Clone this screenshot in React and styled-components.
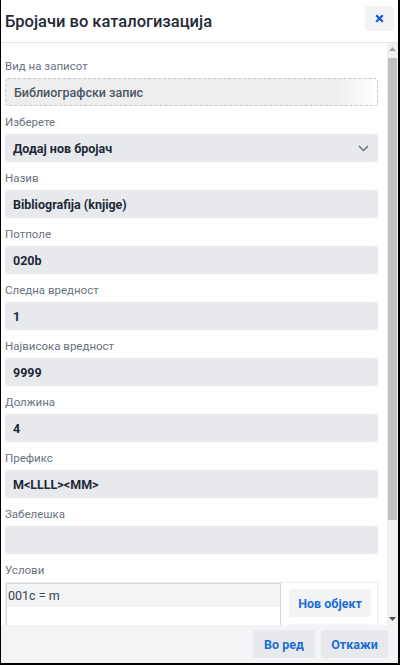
import React from "react";
import styled, { createGlobalStyle } from "styled-components";

const GlobalStyle = createGlobalStyle`
  html, body {
    margin: 0;
    padding: 0;
    background: #fff;
  }
  body {
    font-family: Roboto, "Noto Sans", sans-serif;
  }
  * {
    box-sizing: border-box;
  }
`;

const Dialog = styled.div`
  width: 400px;
  height: 665px;
  display: flex;
  flex-direction: column;
  background: #fff;
  border-left: 1px solid #000;
  border-right: 2px solid #000;
  border-bottom: 2px solid #000;
  overflow: hidden;
`;

const Header = styled.div`
  height: 43px;
  flex-shrink: 0;
  display: flex;
  align-items: center;
  justify-content: space-between;
  padding: 0 4px 0 4px;
  border-bottom: 1px solid #e3e5ea;
`;

const Title = styled.h2`
  margin: 0;
  font-size: 16.5px;
  font-weight: 500;
  color: #1f2937;
`;

const CloseButton = styled.button`
  width: 29px;
  height: 25px;
  margin-top: -5px;
  border: none;
  border-radius: 3px;
  background: #f2f3f5;
  display: flex;
  align-items: center;
  justify-content: center;
  padding: 0;
  cursor: pointer;
`;

const Main = styled.div`
  flex: 1;
  min-height: 0;
  display: flex;
`;

const Content = styled.div`
  flex: 1;
  overflow: hidden;
  padding: 15px 9px 0 4px;
`;

const Scrollbar = styled.div`
  width: 11px;
  flex-shrink: 0;
  display: flex;
  flex-direction: column;
  background: #f1f1f1;
`;

const ScrollArrow = styled.div`
  height: 12px;
  flex-shrink: 0;
  display: flex;
  align-items: center;
  justify-content: center;
`;

const ScrollTrack = styled.div`
  flex: 1;
  padding: 3px 1px 0 1px;
`;

const ScrollThumb = styled.div`
  height: 462px;
  background: #c1c1c1;
`;

const Field = styled.div`
  margin-bottom: 8px;
`;

const Label = styled.div`
  font-size: 11.5px;
  line-height: 16px;
  color: #6b7280;
  margin-bottom: 4px;
`;

const ValueBox = styled.div`
  height: 28px;
  display: flex;
  align-items: center;
  justify-content: space-between;
  padding: 0 9px 0 8px;
  border-radius: 3px;
  font-size: 12.5px;
  font-weight: ${(p) => (p.$muted ? 500 : 700)};
  color: ${(p) => (p.$muted ? "#4b5563" : "#1f2937")};
  background: ${(p) =>
    p.$muted
      ? "linear-gradient(90deg, #eeeeee 0%, #eeeeee 89%, #ffffff 100%)"
      : "#e7e9ed"};
  border: ${(p) => (p.$muted ? "1px dashed #c8c8c8" : "none")};
`;

const Conditions = styled.div`
  display: flex;
  border: 1px solid #eceef1;
  height: 150px;
`;

const ConditionList = styled.div`
  width: 275px;
  border: 1px solid #d6d8dc;
  border-bottom: none;
`;

const ConditionRow = styled.div`
  height: 23px;
  display: flex;
  align-items: center;
  padding-left: 1px;
  background: #f3f4f6;
  font-size: 12.5px;
  color: #374151;
`;

const ConditionActions = styled.div`
  flex: 1;
  display: flex;
  flex-direction: column;
  gap: 7px;
  padding: 6px 6px 0 8px;
`;

const Button = styled.button`
  height: 28px;
  flex-shrink: 0;
  width: ${(p) => p.$width || "auto"};
  border: none;
  border-radius: 3px;
  background: ${(p) => (p.$footer ? "#e8e9ec" : "#f2f3f5")};
  color: #1b6ed6;
  font-family: inherit;
  font-size: 12.5px;
  font-weight: 700;
  padding: 0;
  cursor: pointer;
`;

const Footer = styled.div`
  height: 38px;
  flex-shrink: 0;
  display: flex;
  align-items: center;
  justify-content: flex-end;
  gap: 6px;
  padding: 0 10px 0 0;
  background: #f3f4f6;
`;

const Chevron = () => (
  <svg width="11" height="7" viewBox="0 0 11 7" fill="none">
    <path d="M1 1l4.5 4.5L10 1" stroke="#6b7280" strokeWidth="1.5" />
  </svg>
);

const CloseIcon = () => (
  <svg width="9" height="9" viewBox="0 0 9 9">
    <path d="M1.2 1.2l6.6 6.6M7.8 1.2L1.2 7.8" stroke="#1a56db" strokeWidth="2.2" />
  </svg>
);

const Triangle = ({ down, color }) => (
  <svg width="7" height="4" viewBox="0 0 7 4">
    <path d={down ? "M0 0h7L3.5 4z" : "M0 4h7L3.5 0z"} fill={color} />
  </svg>
);

const fields = [
  { label: "Назив", value: "Bibliografija (knjige)" },
  { label: "Потполе", value: "020b" },
  { label: "Следна вредност", value: "1" },
  { label: "Највисока вредност", value: "9999" },
  { label: "Должина", value: "4" },
  { label: "Префикс", value: "M<LLLL><MM>" },
  { label: "Забелешка", value: "" },
];

export default function App() {
  return (
    <>
      <GlobalStyle />
      <Dialog>
        <Header>
          <Title>Бројачи во каталогизација</Title>
          <CloseButton>
            <CloseIcon />
          </CloseButton>
        </Header>
        <Main>
          <Content>
            <Field>
              <Label>Вид на записот</Label>
              <ValueBox $muted>Библиографски запис</ValueBox>
            </Field>
            <Field>
              <Label>Изберете</Label>
              <ValueBox>
                Додај нов бројач
                <Chevron />
              </ValueBox>
            </Field>
            {fields.map((f) => (
              <Field key={f.label}>
                <Label>{f.label}</Label>
                <ValueBox>{f.value}</ValueBox>
              </Field>
            ))}
            <Field>
              <Label>Услови</Label>
              <Conditions>
                <ConditionList>
                  <ConditionRow>001c = m</ConditionRow>
                </ConditionList>
                <ConditionActions>
                  <Button>Нов објект</Button>
                  <Button aria-label="Избриши" />
                </ConditionActions>
              </Conditions>
            </Field>
          </Content>
          <Scrollbar>
            <ScrollArrow>
              <Triangle color="#a3a3a3" />
            </ScrollArrow>
            <ScrollTrack>
              <ScrollThumb />
            </ScrollTrack>
            <ScrollArrow>
              <Triangle down color="#505050" />
            </ScrollArrow>
          </Scrollbar>
        </Main>
        <Footer>
          <Button $footer $width="62px">Во ред</Button>
          <Button $footer $width="67px">Откажи</Button>
        </Footer>
      </Dialog>
    </>
  );
}
